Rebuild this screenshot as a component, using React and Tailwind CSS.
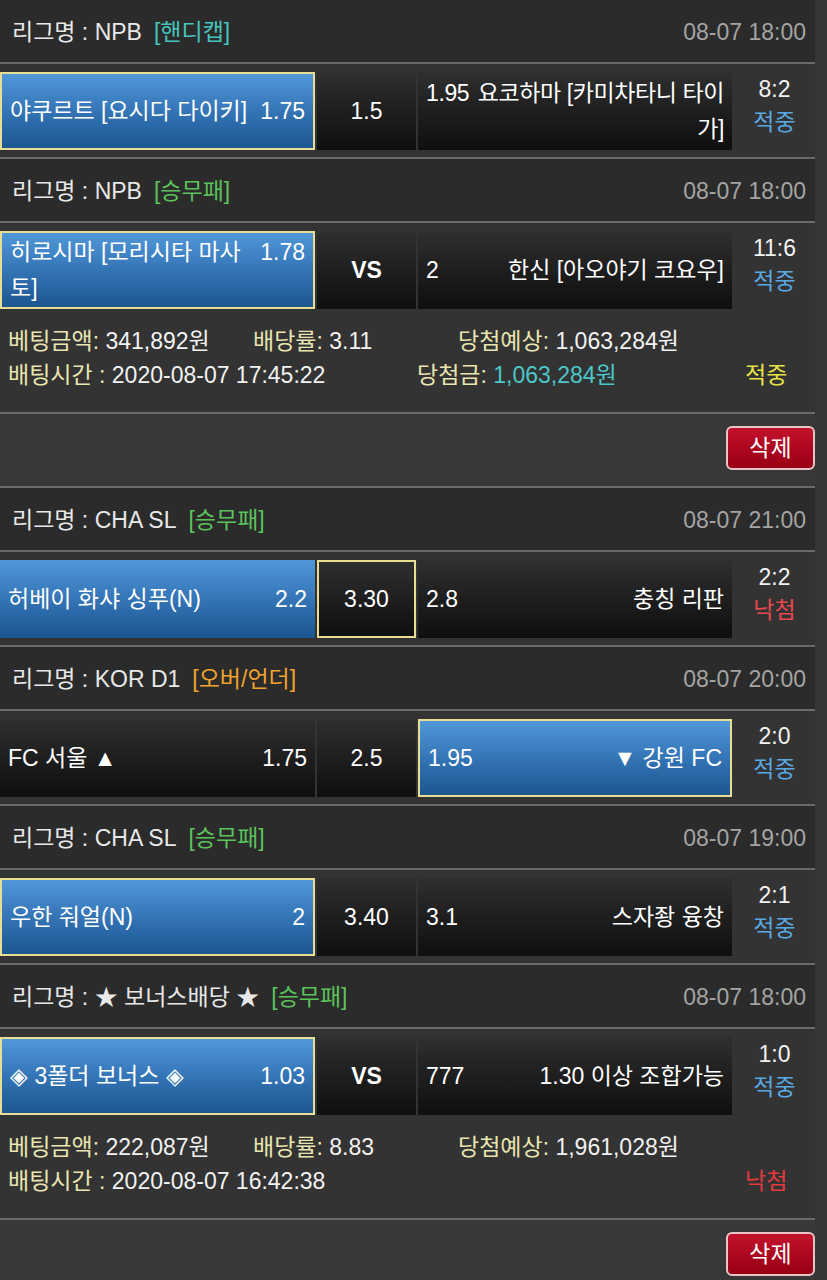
import React from "react";

const LINE = "border-b-2 border-[#6a6a6a]";

const GAMES = [
  {
    league: "NPB",
    tag: "[핸디캡]",
    tagColor: "text-[#45c4bd]",
    time: "08-07 18:00",
    home: { lines: ["야쿠르트 [요시다 다이키]"], odds: "1.75" },
    mid: "1.5",
    away: { lines: ["요코하마 [카미차타니 타이", "가]"], odds: "1.95", tight: true },
    blue: "home",
    pick: "home",
    score: "8:2",
    result: "적중",
  },
  {
    league: "NPB",
    tag: "[승무패]",
    tagColor: "text-[#5cc25c]",
    time: "08-07 18:00",
    home: { lines: ["히로시마 [모리시타 마사", "토]"], odds: "1.78" },
    mid: "VS",
    away: { lines: ["한신 [아오야기 코요우]"], odds: "2" },
    blue: "home",
    pick: "home",
    score: "11:6",
    result: "적중",
    bet: {
      amount: "341,892원",
      rate: "3.11",
      expect: "1,063,284원",
      time: "2020-08-07 17:45:22",
      win: "1,063,284원",
      status: "적중",
    },
  },
  {
    league: "CHA SL",
    tag: "[승무패]",
    tagColor: "text-[#5cc25c]",
    time: "08-07 21:00",
    home: { lines: ["허베이 화샤 싱푸(N)"], odds: "2.2" },
    mid: "3.30",
    away: { lines: ["충칭 리판"], odds: "2.8" },
    blue: "home",
    pick: "mid",
    score: "2:2",
    result: "낙첨",
  },
  {
    league: "KOR D1",
    tag: "[오버/언더]",
    tagColor: "text-[#f0a22e]",
    time: "08-07 20:00",
    home: { lines: ["FC 서울 ▲"], odds: "1.75" },
    mid: "2.5",
    away: { lines: ["▼ 강원 FC"], odds: "1.95" },
    blue: "away",
    pick: "away",
    score: "2:0",
    result: "적중",
  },
  {
    league: "CHA SL",
    tag: "[승무패]",
    tagColor: "text-[#5cc25c]",
    time: "08-07 19:00",
    home: { lines: ["우한 줘얼(N)"], odds: "2" },
    mid: "3.40",
    away: { lines: ["스자좡 융창"], odds: "3.1" },
    blue: "home",
    pick: "home",
    score: "2:1",
    result: "적중",
  },
  {
    league: "★ 보너스배당 ★",
    tag: "[승무패]",
    tagColor: "text-[#5cc25c]",
    time: "08-07 18:00",
    home: { lines: ["◈ 3폴더 보너스 ◈"], odds: "1.03" },
    mid: "VS",
    away: { lines: ["1.30 이상 조합가능"], odds: "777" },
    blue: "home",
    pick: "home",
    score: "1:0",
    result: "적중",
    bet: {
      amount: "222,087원",
      rate: "8.83",
      expect: "1,961,028원",
      time: "2020-08-07 16:42:38",
      status: "낙첨",
    },
  },
];

function cellClass(isBlue, isPick) {
  const bg = isBlue
    ? "bg-linear-to-b from-[#5198d9] via-[#3475b6] to-[#1b5690]"
    : "bg-linear-to-b from-[#2f2f2f] to-[#0f0f0f]";
  const border = isPick ? "border-2 border-[#e9dc93]" : "";
  return `h-[78px] flex items-center px-2 ${bg} ${border}`;
}

function Header({ game }) {
  return (
    <div className={`h-[64px] flex items-center justify-between pl-3 pr-[9px] pt-[2px] bg-[#2b2b2b] ${LINE}`}>
      <div className="text-[#e8e8e8]">
        리그명 : {game.league}
        <span className={`ml-3 ${game.tagColor}`}>{game.tag}</span>
      </div>
      <div className="text-[#a4a4a4]">{game.time}</div>
    </div>
  );
}

function BetRow({ game }) {
  const { home, away } = game;
  return (
    <div className={`flex items-start gap-[2px] pt-2 pb-[7px] bg-[#333333] ${game.bet ? "" : LINE}`}>
      <div className={`w-[315px] shrink-0 ${cellClass(game.blue === "home", game.pick === "home")}`}>
        <div className="flex w-full items-start justify-between leading-[36px]">
          <div>
            {home.lines.map((l, i) => (
              <div key={i} className="whitespace-nowrap">{l}</div>
            ))}
          </div>
          <div className="shrink-0 ml-2">{home.odds}</div>
        </div>
      </div>
      <div className={`w-[99px] shrink-0 justify-center ${cellClass(false, game.pick === "mid")}`}>
        <span className={game.mid === "VS" ? "font-bold" : ""}>{game.mid}</span>
      </div>
      <div className={`w-[314px] shrink-0 ${cellClass(game.blue === "away", game.pick === "away")}`}>
        <div className={`flex w-full items-start justify-between leading-[36px] ${away.tight ? "tracking-[-0.4px]" : ""}`}>
          <div className="shrink-0 mr-1">{away.odds}</div>
          <div className="text-right">
            {away.lines.map((l, i) => (
              <div key={i} className="whitespace-nowrap">{l}</div>
            ))}
          </div>
        </div>
      </div>
      <div className="flex-1 h-[78px] flex flex-col items-center justify-center pb-[10px] leading-[33px]">
        <div className="text-[#f2f2f2]">{game.score}</div>
        <div className={game.result === "적중" ? "text-[#5aa8e2]" : "text-[#e5484d]"}>{game.result}</div>
      </div>
    </div>
  );
}

function Label({ children }) {
  return <span className="text-[#e9e5b0]">{children}</span>;
}

function BetInfo({ bet }) {
  return (
    <>
      <div className={`bg-[#333333] pt-2 pb-5 pl-2 leading-[34px] text-[#f2f2f2] ${LINE}`}>
        <div className="flex">
          <div className="w-[245px]">
            <Label>베팅금액:</Label> {bet.amount}
          </div>
          <div className="w-[205px]">
            <Label>배당률:</Label> {bet.rate}
          </div>
          <div>
            <Label>당첨예상:</Label> {bet.expect}
          </div>
        </div>
        <div className="flex">
          <div className="w-[409px]">
            <Label>배팅시간 :</Label> {bet.time}
          </div>
          <div className="w-[328px]">
            {bet.win && (
              <>
                <Label>당첨금:</Label> <span className="text-[#4cc6c8]">{bet.win}</span>
              </>
            )}
          </div>
          <div className={bet.status === "적중" ? "text-[#e8e244]" : "text-[#e5383b]"}>{bet.status}</div>
        </div>
      </div>
      <div className={`flex justify-end pt-3 pb-4 bg-[#383838] ${LINE}`}>
        <button className="w-[89px] h-[44px] rounded-md border-2 border-[#e8c4c4] bg-linear-to-b from-[#c3112b] to-[#980014] text-white">
          삭제
        </button>
      </div>
    </>
  );
}

export default function App() {
  return (
    <div className="min-h-screen w-full bg-[#363636] font-['Liberation_Sans','Noto_Sans_CJK_KR',sans-serif] text-[23px] text-white">
      <div className="w-[815px]">
        {GAMES.map((g, i) => (
          <div key={i}>
            <Header game={g} />
            <BetRow game={g} />
            {g.bet && <BetInfo bet={g.bet} />}
          </div>
        ))}
      </div>
    </div>
  );
}
